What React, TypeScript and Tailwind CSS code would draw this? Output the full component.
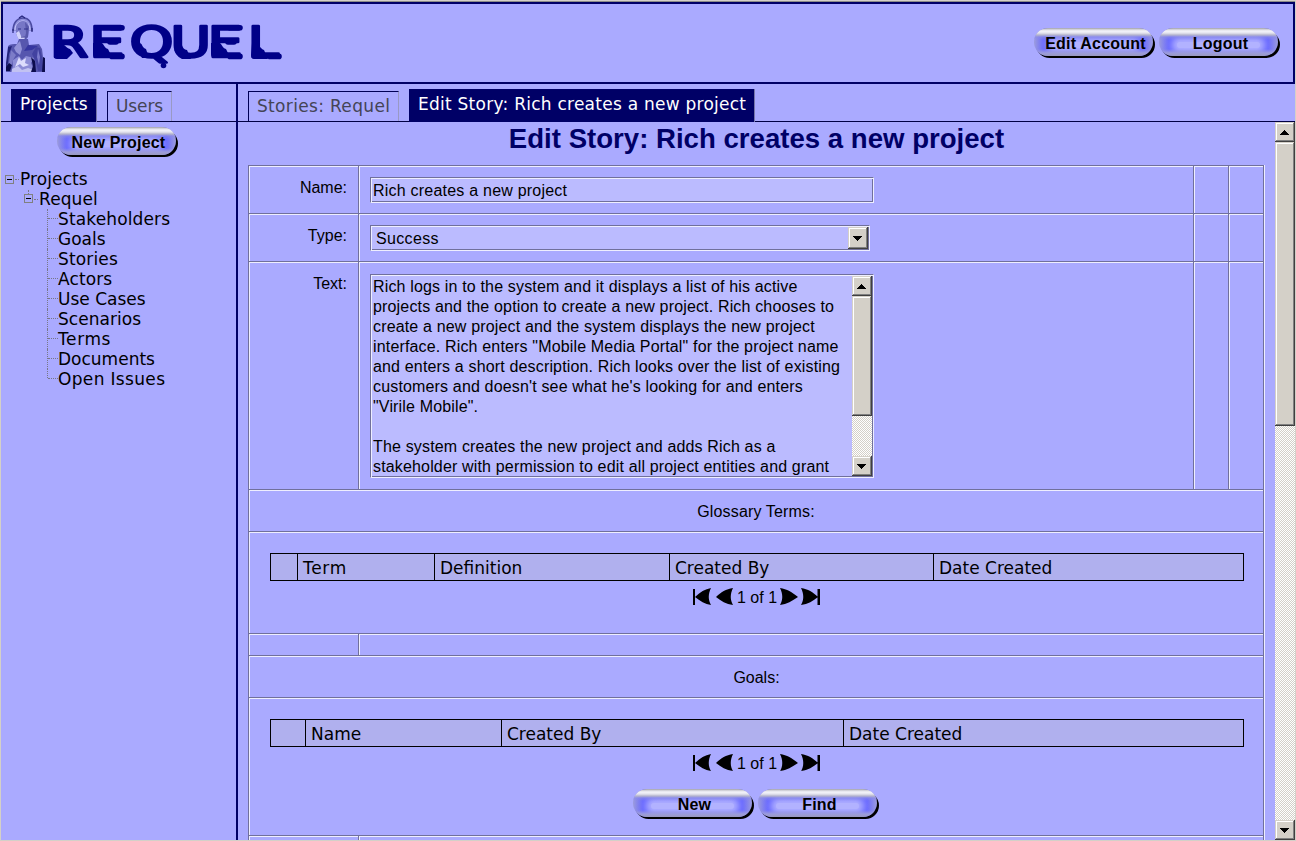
import React from "react";

const verdana = "font-['DejaVu_Sans',sans-serif] text-[17px]";
const bevel =
  "bg-[#d4d0c8] shadow-[inset_-1px_-1px_0_#404040,inset_1px_1px_0_#d4d0c8,inset_-2px_-2px_0_#808080,inset_2px_2px_0_#ffffff]";
const sunken = "bg-[#bbbbff] border border-[#eeeeff] border-t-[#70709c] border-l-[#70709c] shadow-[inset_1px_1px_0_#eeeeff,inset_-1px_-1px_0_#70709c]";

function Arrow({ up }: { up?: boolean }) {
  return (
    <svg width="9" height="5" viewBox="0 0 9 5" shapeRendering="crispEdges" className="-ml-px">
      <path d={up ? "M4 0h1v1h1v1h1v1h1v1h1v1H0V4h1V3h1V2h1V1h1z" : "M0 0h9v1H8v1H7v1H6v1H5v1H4V4H3V3H2V2H1V1H0z"} fill="#000" />
    </svg>
  );
}

function ScrollBar({ thumb }: { thumb: string }) {
  return (
    <div className="flex w-5 shrink-0 flex-col bg-[repeating-conic-gradient(#ffffff_0_25%,#d4d0c8_0_50%)] bg-[length:2px_2px]">
      <div className={`flex h-5 shrink-0 items-center justify-center ${bevel}`}><Arrow up /></div>
      <div className={`shrink-0 ${thumb} ${bevel}`} />
      <div className={`mt-auto flex h-5 shrink-0 items-center justify-center ${bevel}`}><Arrow /></div>
    </div>
  );
}

function PillButton({ children }: { children: string }) {
  return (
    <button className="relative h-[30px] w-[122px] shrink-0 pr-[3px] font-['Liberation_Sans',Arial,sans-serif] text-base font-bold text-black">
      <span className="absolute top-[3px] left-[3px] h-[27px] w-[119px] rounded-full bg-black" />
      <span className="absolute top-0 left-px h-[28px] w-[119px] overflow-hidden rounded-full bg-[linear-gradient(90deg,#9c9cdd,#6868ff_10px,#6868ff_109px,#9c9cdd)]">
        <span className="absolute top-[14px] left-[18px] h-[6px] w-[83px] rounded-full bg-[#b2b2ff] shadow-[0_0_6px_5px_#aeaeff]" />
        <span className="absolute inset-0 bg-[linear-gradient(180deg,#9999a4_0px,#c6c6ce_1px,#f4f4fa_3px,#e4e4ee_5px,#b4b4cc_7px,rgba(140,140,230,.6)_9px,rgba(120,120,255,0)_12px,rgba(150,150,240,0)_21px,#9c9cdc_25px,#9999c0_28px)]" />
      </span>
      <span className="relative top-px left-[3px] whitespace-nowrap tracking-[0.2px]">{children}</span>
    </button>
  );
}

function Tab({ label, active, width }: { label: string; active?: boolean; width: string }) {
  return active ? (
    <div className={`-mb-px h-[33px] shrink-0 border-r border-[#7777aa] bg-[#000066] pt-[2px] pl-[9px] leading-[26px] whitespace-nowrap text-white ${verdana} ${width}`}>{label}</div>
  ) : (
    <div className={`h-[30px] shrink-0 border-t border-r border-l border-[#000055] border-r-[#9999c4] pt-[2px] pl-[8px] leading-[25px] whitespace-nowrap text-[#444455] ${verdana} ${width}`}>{label}</div>
  );
}

function Toggle() {
  return (
    <span className="flex h-[9px] w-[9px] shrink-0 items-center justify-center border border-[#808080]">
      <span className="h-px w-[5px] bg-black" />
    </span>
  );
}

function Cell({ className = "", children }: { className?: string; children?: React.ReactNode }) {
  return <div className={`border-t border-l border-[#70709c] shadow-[inset_1px_1px_0_#eeeeff] ${className}`}>{children}</div>;
}

function FormRow({ label, height, children }: { label: string; height: string; children: React.ReactNode }) {
  return (
    <div className={`flex ${height}`}>
      <Cell className="w-[110px] pt-[12px] pr-[11px] text-right leading-[20px]">{label}</Cell>
      <Cell className="w-[835px] pt-[11px] pl-[11px]">{children}</Cell>
      <Cell className="w-[35px]" />
      <Cell className="w-[35px]" />
    </div>
  );
}

function Header({ cols }: { cols: [string, string][] }) {
  return (
    <div className={`flex h-[28px] w-[974px] border border-black bg-[#b0b0ee] leading-[28px] ${verdana}`}>
      {cols.map(([text, cls], i) => (
        <div key={i} className={`pl-[5px] whitespace-nowrap ${cls}`}>{text}</div>
      ))}
    </div>
  );
}

function Pager() {
  return (
    <div className="mt-[6px] flex h-[20px] w-[974px] items-center pl-[422px] leading-[20px]">
      <svg width="44" height="20" viewBox="0 0 44 20">
        <path d="M1 2h2v16H1z M3 10C8 5 13 2 19 1c-3 6-3 12 0 17C13 17 8 14 3 10z M24 10C29 5 34 2 41 1c-3 6-3 12 0 17C34 17 29 14 24 10z" />
      </svg>
      <span className="w-[44px] pt-[2px] pl-px whitespace-pre">1 of 1</span>
      <svg width="42" height="20" viewBox="0 0 42 20">
        <path d="M0 1C7 2 12 5 18 10 12 14 7 17 0 18c3-5 3-11 0-17z M21 1C28 2 33 5 38 10 33 14 28 17 21 18c3-5 3-11 0-17z M37.500 2H40v16h-2.500z" />
      </svg>
    </div>
  );
}

function Logo() {
  return (
    <svg width="290" height="76" viewBox="0 0 290 76" className="shrink-0">
      <path d="M13 31c0-8 4-13 10-13s9 5 9 13" fill="#8f8fdc" stroke="#4a4aa0" strokeWidth="1.6" />
      <path d="M19 18l3-2 3 2M13 29v4m19-5v4" fill="none" stroke="#26267c" strokeWidth="1.2" />
      <path d="M15 30c0-6 4-9 8-9s7 4 7 9" fill="none" stroke="#c8c8fa" strokeWidth="1" />
      <path d="M16 29c0-5 3-8 7-8 4 0 6 3 6 8l-1 8-4 5-5-2-3-6z" fill="#7777c6" />
      <path d="M16 33l3-2 2 5 5 1-3 5-4-2-2-4z" fill="#d2d2fb" />
      <path d="M25 22l4 5-1 10-4 4 2-8z" fill="#5858aa" />
      <path d="M18 29h3m3 0h4M21 37h4" stroke="#30308a" strokeWidth="1" />
      <path d="M19 39h9l1 6 10-1 3 5 1 8 2 2v13H6l2-16V46c2-2 6-2 9-2z" fill="#5656ae" />
      <path d="M17 44l3-3 2 8-2 6-4-3-2-4z" fill="#9292d8" />
      <path d="M28 45l10 1-6 4-8 1z" fill="#3636a0" />
      <path d="M8 47l4-1-3 8-1 9-2 6v-6z" fill="#22227a" />
      <path d="M11 50l5 5-3 5-1 6-4 5H7l2-8z" fill="#7c7cc8" />
      <path d="M13 60l6-4 3 4 4-4 8 2-3 5 3 7-2 2H11l2-6z" fill="#8c8cd6" />
      <path d="M19 57l2 4 5-3-1 5 4 2-6 2-3-3-5 3z" fill="#dcdcfc" />
      <path d="M12 69l6-3 4 4 6-2 6 2v2H12z" fill="#c2c2f2" />
      <path d="M36 47l4 1 2 9 1 14h-5l-2-9-4-8z" fill="#4242a0" />
      <path d="M31 57l4 4 1 11h-5l2-6zM43 57l2 1v14h-3zM9 63l3 2-2 6H6v-4z" fill="#0c0c4c" />
      <path d="M38 49l2 8-1 8-2-8z" fill="#7b7bcc" />
      <text
        y="57.5"
        x="38.2 68.6 99.6 130.9 159.6 190.4"
        transform="scale(1.3 1)"
        fill="#000088"
        stroke="#000088"
        strokeWidth="2.4"
        strokeLinejoin="round"
        fontFamily="'DejaVu Sans', sans-serif"
        fontSize="43"
      >REQUEL</text>
      <g fill="none" stroke="#000088" strokeWidth="5.6" strokeLinecap="round">
        <path d="M112 27.700h10M110 42h6M112 56.400h10M230 27.700h10M228 42h6M230 56.400h10M270 56.400h9" />
      </g>
      <g fill="#000088">
        <path d="M55 43h5c4 0 6 5 10 6l3 4-6 6H57q-3 0-3-3V44z" />
        <path d="M94 43h7c3 0 3 5 7 6l3 6v3H97q-4 0-4-4V43z" />
        <path d="M134 43h5c4 0 2 4 7 6l3 9h-7z" />
        <path d="M174 43h5c4 0 2 6 8 7l4 9h-9q-8-4-8-12z" />
        <path d="M212 43h7c3 0 3 5 7 6l3 6v3h-14q-4 0-4-4V43z" />
        <path d="M252 43h4c3 0 3 5 8 7l4 9h-14q-3 0-3-4z" />
        <circle cx="163.500" cy="65.500" r="2.800" />
      </g>
    </svg>
  );
}

const items: [string, string][] = [
  ["Stakeholders", "tracking-[0.13px]"],
  ["Goals", "tracking-normal"],
  ["Stories", "tracking-[0.15px]"],
  ["Actors", "tracking-[0.1px]"],
  ["Use Cases", "tracking-normal"],
  ["Scenarios", "tracking-[0.05px]"],
  ["Terms", "tracking-[0.6px]"],
  ["Documents", "tracking-normal"],
  ["Open Issues", "tracking-[0.34px]"],
];

const story = `Rich logs in to the system and it displays a list of his active
projects and the option to create a new project. Rich chooses to
create a new project and the system displays the new project
interface. Rich enters "Mobile Media Portal" for the project name
and enters a short description. Rich looks over the list of existing
customers and doesn't see what he's looking for and enters
"Virile Mobile".

The system creates the new project and adds Rich as a
stakeholder with permission to edit all project entities and grant`;

export default function App() {
  return (
    <div className="flex h-[841px] w-[1296px] flex-col overflow-hidden bg-[#d4d0c8] px-px pb-px font-['Liberation_Sans',Arial,sans-serif] text-base text-black">
      <div className="mt-px h-px shrink-0 bg-[#8c8c88]" />
      <header className="flex h-[82px] shrink-0 items-start justify-between border-2 border-[#000066] bg-[#aaaaff]">
        <div className="-mt-1 -ml-[3px]"><Logo /></div>
        <div className="flex gap-[3px] pt-[24px] pr-[13px]">
          <PillButton>Edit Account</PillButton>
          <PillButton>Logout</PillButton>
        </div>
      </header>
      <div className="flex h-[756px] shrink-0 bg-[#aaaaff]">
        <aside className="w-[235px] shrink-0">
          <div className="flex h-[38px] items-end gap-[10px] border-b border-[#000044] pl-[10px]">
            <Tab label="Projects" active width="w-[86px] tracking-[0.1px]" />
            <Tab label="Users" width="w-[65px] tracking-[-0.1px]" />
          </div>
          <div className="pt-[5px] pl-[55px]"><PillButton>New Project</PillButton></div>
          <div className={`pt-[12px] leading-[20px] ${verdana}`}>
            <div className="flex h-5 items-center pl-[4px]">
              <Toggle />
              <span className="mr-px ml-px w-[4px] border-t border-dotted border-[#777788]" />
              <span className="tracking-[0.1px]">Projects</span>
            </div>
            <div className="flex h-5 items-center pl-[23px]">
              <div className="flex flex-col items-center self-start">
                <span className="mt-px h-[4px] border-l border-dotted border-[#777788]" />
                <Toggle />
              </div>
              <span className="mr-px ml-px w-[4px] border-t border-dotted border-[#777788]" />
              <span className="tracking-[0.1px]">Requel</span>
            </div>
            {items.map(([item, tracking], i) => (
              <div key={item} className="flex h-5 pl-[46px]">
                <span className={`${i === items.length - 1 ? "h-[9px]" : "h-5"} w-0 border-l border-dotted border-[#777788]`} />
                <span className="mt-[9px] h-0 w-[10px] border-t border-dotted border-[#777788]" />
                <span className={`whitespace-nowrap ${tracking}`}>{item}</span>
              </div>
            ))}
          </div>
        </aside>
        <div className="w-[2px] shrink-0 bg-[#000066]" />
        <main className="flex w-[1057px] shrink-0 flex-col">
          <div className="flex h-[38px] shrink-0 items-end gap-[10px] border-b border-[#000044] pl-[10px]">
            <Tab label="Stories: Requel" width="w-[151px] tracking-[0.33px]" />
            <Tab label="Edit Story: Rich creates a new project" active width="w-[346px] tracking-[0.25px]" />
          </div>
          <div className="flex h-[718px]">
            <div className="h-[718px] w-[1037px] overflow-hidden">
              <h1 className="h-[43px] text-center text-[27.6px] leading-[34px] font-bold text-[#000066]">Edit Story: Rich creates a new project</h1>
              <div className="ml-[10px] flex h-[700px] w-[1017px] flex-col border-r border-[#eeeeff]">
                <div className="flex w-[1016px] flex-col border-r border-[#70709c]">
                  <FormRow label="Name:" height="h-[48px]">
                    <div className={`h-[26px] w-[504px] pl-[2px] leading-[25px] tracking-[0.22px] ${sunken}`}>Rich creates a new project</div>
                  </FormRow>
                  <FormRow label="Type:" height="h-[48px]">
                    <div className={`flex h-[26px] w-[500px] justify-between pt-px pr-px pl-[5px] leading-[24px] ${sunken}`}>
                      <span className="tracking-[0.35px]">Success</span>
                      <span className={`flex h-[22px] w-[20px] items-center justify-center ${bevel}`}><Arrow /></span>
                    </div>
                  </FormRow>
                  <FormRow label="Text:" height="h-[228px]">
                    <div className={`mt-px flex h-[204px] w-[504px] justify-between overflow-hidden pt-px pr-px pb-px pl-[2px] ${sunken}`}>
                      <div className="mt-px h-[199px] overflow-hidden leading-[20px] tracking-[0.16px] whitespace-pre">{story}</div>
                      <ScrollBar thumb="h-[120px]" />
                    </div>
                  </FormRow>
                  <Cell className="h-[42px] text-center leading-[43px] tracking-[0.15px]">Glossary Terms:</Cell>
                  <Cell className="h-[102px] pt-[21px] pl-[21px]">
                    <Header cols={[["", "w-[26px]"], ["Term", "w-[137px] border-l border-black tracking-[0.7px]"], ["Definition", "w-[235px] border-l border-black"], ["Created By", "w-[264px] border-l border-black"], ["Date Created", "grow border-l border-black"]]} />
                    <Pager />
                  </Cell>
                  <div className="flex h-[22px]">
                    <Cell className="w-[110px]" />
                    <Cell className="grow" />
                  </div>
                  <Cell className="h-[42px] pl-px text-center leading-[43px]">Goals:</Cell>
                  <Cell className="h-[138px] pt-[21px] pl-[21px]">
                    <Header cols={[["", "w-[34px]"], ["Name", "w-[196px] border-l border-black"], ["Created By", "w-[342px] border-l border-black"], ["Date Created", "grow border-l border-black"]]} />
                    <Pager />
                    <div className="mt-[16px] flex gap-[3px] pl-[362px]">
                      <PillButton>New</PillButton>
                      <PillButton>Find</PillButton>
                    </div>
                  </Cell>
                  <div className="flex h-[22px]">
                    <Cell className="w-[110px]" />
                    <Cell className="grow" />
                  </div>
                </div>
              </div>
            </div>
            <ScrollBar thumb="h-[284px]" />
          </div>
        </main>
      </div>
    </div>
  );
}
